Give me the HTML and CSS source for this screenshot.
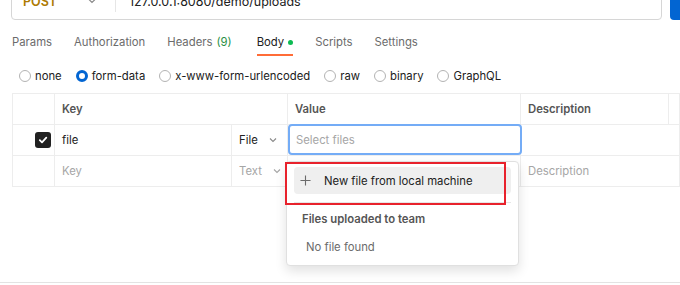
FILE: index.html
```html
<!DOCTYPE html>
<html lang="en">
<head>
    <meta charset="UTF-8">
    <title>Request body</title>
    <link rel="stylesheet" href="styles.css">
</head>
<body>
    <!-- Request URL bar (scrolled, top cut off) -->
    <div class="request-row">
        <div class="url-box">
            <div class="method">POST
                <svg class="chev" width="10" height="10" viewBox="0 0 10 10"><path d="M2 3.5l3 3 3-3" fill="none" stroke="#8a8a8a" stroke-width="1.2"/></svg>
            </div>
            <div class="url">127.0.0.1:8080/demo/uploads</div>
        </div>
        <div class="send-button"></div>
    </div>

    <nav class="tabs">
        <span class="tab">Params</span>
        <span class="tab">Authorization</span>
        <span class="tab">Headers <span class="count">(9)</span></span>
        <span class="tab active">Body <span class="dot"></span></span>
        <span class="tab">Scripts</span>
        <span class="tab">Settings</span>
    </nav>

    <div class="body-types">
        <label class="radio"><span class="circle"></span>none</label>
        <label class="radio"><span class="circle checked"></span>form-data</label>
        <label class="radio"><span class="circle"></span>x-www-form-urlencoded</label>
        <label class="radio"><span class="circle"></span>raw</label>
        <label class="radio"><span class="circle"></span>binary</label>
        <label class="radio"><span class="circle"></span>GraphQL</label>
    </div>

    <section class="body-panel">
        <div class="kv-table">
            <div class="cell"></div>
            <div class="cell head span2">Key</div>
            <div class="cell head">Value</div>
            <div class="cell head">Description</div>
            <div class="cell"></div>

            <div class="cell check-cell">
                <span class="checkbox">
                    <svg width="10" height="10" viewBox="0 0 10 10"><path d="M1.8 5.2l2.2 2.1 4.3-4.6" fill="none" stroke="#fff" stroke-width="1.8" stroke-linecap="round" stroke-linejoin="round"/></svg>
                </span>
            </div>
            <div class="cell">file</div>
            <div class="cell type">File
                <svg class="chev" width="10" height="10" viewBox="0 0 10 10"><path d="M2 3.5l3 3 3-3" fill="none" stroke="#8a8a8a" stroke-width="1.1"/></svg>
            </div>
            <div class="cell value-cell"><div class="file-input">Select files</div></div>
            <div class="cell span2"></div>

            <div class="cell"></div>
            <div class="cell placeholder">Key</div>
            <div class="cell type placeholder">Text
                <svg class="chev" width="10" height="10" viewBox="0 0 10 10"><path d="M2 3.5l3 3 3-3" fill="none" stroke="#a6a6a6" stroke-width="1.1"/></svg>
            </div>
            <div class="cell"></div>
            <div class="cell span2 placeholder">Description</div>
        </div>

        <!-- File picker menu -->
        <div class="file-menu">
            <div class="menu-item">
                <svg width="11" height="11" viewBox="0 0 12 12"><path d="M6 0.5v11M0.5 6h11" stroke="#6b6b6b" stroke-width="1.2"/></svg>
                New file from local machine
            </div>
            <div class="menu-divider"></div>
            <div class="menu-title">Files uploaded to team</div>
            <div class="menu-empty">No file found</div>
            <div class="highlight"></div>
        </div>
    </section>

    <div class="footer-line"></div>
</body>
</html>
```

FILE: styles.css
```css
/* Base */
body {
    margin: 0;
    font-family: Inter, "Noto Sans", sans-serif;
    font-size: 11.3px;
    color: #212121;
    background: #fff;
    overflow: hidden;
}

/* Request bar */
.request-row {
    display: flex;
    gap: 8px;
    margin-top: -18px;
    padding-left: 11px;
    height: 38px;
}

.url-box {
    width: 649px;
    display: flex;
    align-items: center;
    border: 1px solid #d6d6d6;
    border-radius: 4px;
    font-size: 12.5px;
}

.method {
    display: flex;
    align-items: center;
    gap: 30px;
    width: 92px;
    padding-left: 11px;
    height: 22px;
    border-right: 1px solid #e6e6e6;
    color: #ad7a03;
    font-weight: 600;
}

.url {
    padding-left: 13px;
    color: #212121;
}

.send-button {
    flex: 1;
    background: #0265d2;
    border-radius: 4px 0 0 4px;
}

/* Tabs */
.tabs {
    display: flex;
    gap: 22px;
    margin-top: 14px;
    padding-left: 12px;
}

.tab {
    line-height: 16px;
    padding-bottom: 4px;
    color: #6b6b6b;
    border-bottom: 2px solid transparent;
    display: flex;
    align-items: center;
    gap: 4px;
}

.tab .count {
    color: #2a8f44;
}

.tab.active {
    color: #212121;
    border-bottom-color: #ff6c37;
    margin-left: 3px;
}

.dot {
    width: 5px;
    height: 5px;
    border-radius: 50%;
    background: #0cbb52;
}

/* Body type radios */
.body-types {
    display: flex;
    gap: 14px;
    padding-left: 19px;
    margin-top: 12px;
}

.radio {
    display: flex;
    align-items: center;
    gap: 4px;
    line-height: 16px;
}

.circle {
    width: 10px;
    height: 10px;
    border: 1px solid #b3b3b3;
    border-radius: 50%;
}

.circle.checked {
    width: 6px;
    height: 6px;
    border: 3px solid #0265d2;
}

/* Key / value table */
.body-panel {
    position: relative;
    margin-top: 9px;
    padding-left: 12px;
}

.kv-table {
    display: grid;
    grid-template-columns: 42px 177px 56px 233px 148px 1fr;
    grid-auto-rows: 31px;
    border-top: 1px solid #ededed;
    border-left: 1px solid #ededed;
}

.cell {
    display: flex;
    align-items: center;
    padding-left: 7px;
    border-right: 1px solid #ededed;
    border-bottom: 1px solid #ededed;
}

.span2 {
    grid-column: span 2;
}

.head {
    font-weight: 600;
    color: #555;
}

.placeholder {
    color: #a6a6a6;
}

.type {
    gap: 10px;
}

.check-cell {
    justify-content: flex-end;
    padding-right: 3px;
}

.checkbox {
    width: 16px;
    height: 16px;
    border-radius: 3px;
    background: #212121;
    display: flex;
    align-items: center;
    justify-content: center;
}

.value-cell {
    padding: 0;
    position: relative;
}

.file-input {
    position: absolute;
    left: 0;
    top: -1px;
    right: -2px;
    bottom: 0;
    border: 2px solid #74acf6;
    border-radius: 4px;
    padding-left: 6px;
    display: flex;
    align-items: center;
    color: #a6a6a6;
    background: #fff;
}

/* File menu */
.file-menu {
    position: absolute;
    left: 286px;
    top: 68px;
    width: 217px;
    height: 98px;
    border: 1px solid #e0e0e0;
    border-radius: 4px;
    background: #fff;
    box-shadow: 0 5px 12px rgba(0, 0, 0, 0.12);
    padding: 5px 7px 0;
}

.menu-item {
    height: 27px;
    background: #efefef;
    border-radius: 4px;
    display: flex;
    align-items: center;
    gap: 13px;
    padding-left: 6px;
}

.menu-divider {
    margin-top: 8px;
    border-top: 1px solid #e6e6e6;
}

.menu-title {
    margin-top: 8px;
    padding-left: 8px;
    font-weight: 600;
    color: #555;
    line-height: 16px;
}

.menu-empty {
    margin-top: 12px;
    padding-left: 12px;
    color: #6b6b6b;
    line-height: 16px;
}

.highlight {
    position: absolute;
    left: -2px;
    top: 0;
    width: 217px;
    height: 39px;
    border: 2px solid #e8222c;
}

.footer-line {
    margin-top: 95px;
    border-top: 1px solid #e3e3e3;
}
```
